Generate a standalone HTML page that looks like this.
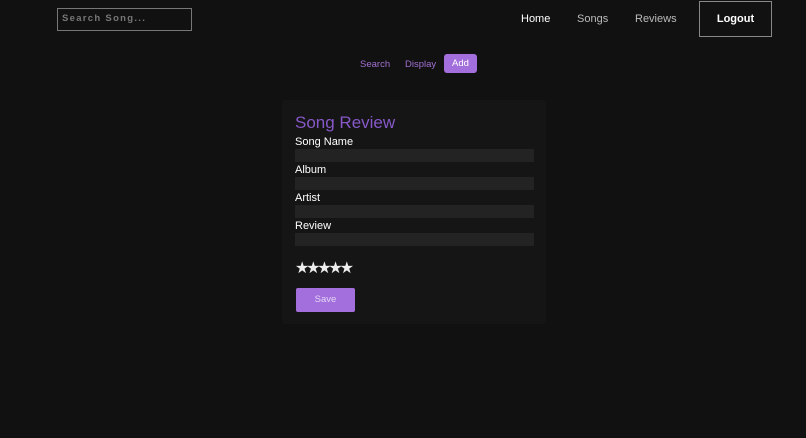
<!DOCTYPE html>
<html><head><style>
*{margin:0;padding:0;box-sizing:border-box}
body{width:806px;height:438px;background:#121112;font-family:"Liberation Sans",sans-serif;position:relative;overflow:hidden;color:#fff}
.a{position:absolute}
.search{left:57px;top:8px;width:135px;height:23px;border:1.5px solid #777;color:#777;font-size:9.5px;font-weight:bold;letter-spacing:1.3px;padding:4px 0 0 4px}
.nav{top:13px;font-size:11px;color:#bbb}
.logout{left:699px;top:1px;width:73px;height:36px;border:1.5px solid #888;font-size:11px;font-weight:bold;color:#fff;text-align:center;line-height:34px}
.tab{top:59px;font-size:9.5px;color:#a070d0}
.add{left:444px;top:54px;width:33px;height:19px;background:#a26fdc;border-radius:3px;color:#fff;font-size:9.5px;text-align:center;line-height:19px}
.card{left:282px;top:100px;width:264px;height:224px;background:#151515;border-radius:4px}
h1{position:absolute;left:295px;top:113px;font-size:17px;font-weight:normal;color:#8658c8}
.lbl{left:295px;font-size:11px;color:#fff}
.inp{left:295px;width:239px;height:13px;background:#232323}
.stars{left:295px;top:258px;font-size:16px;color:#eee;letter-spacing:-3.2px}
.save{left:296px;top:288px;width:59px;height:24px;background:#a26fdc;border-radius:2px;color:#e5d5f5;font-size:9.5px;text-align:center;line-height:24px}
</style></head><body>
<div class="a search">Search Song...</div>
<div class="a nav" style="left:521px;color:#fff">Home</div>
<div class="a nav" style="left:577px">Songs</div>
<div class="a nav" style="left:635px">Reviews</div>
<div class="a logout">Logout</div>
<div class="a tab" style="left:360px">Search</div>
<div class="a tab" style="left:405px">Display</div>
<div class="a add">Add</div>
<div class="a card"></div>
<h1>Song Review</h1>
<div class="a lbl" style="top:136px">Song Name</div>
<div class="a inp" style="top:149px"></div>
<div class="a lbl" style="top:164px">Album</div>
<div class="a inp" style="top:177px"></div>
<div class="a lbl" style="top:192px">Artist</div>
<div class="a inp" style="top:205px"></div>
<div class="a lbl" style="top:220px">Review</div>
<div class="a inp" style="top:233px"></div>
<div class="a stars">★★★★★</div>
<div class="a save">Save</div>
</body></html>
